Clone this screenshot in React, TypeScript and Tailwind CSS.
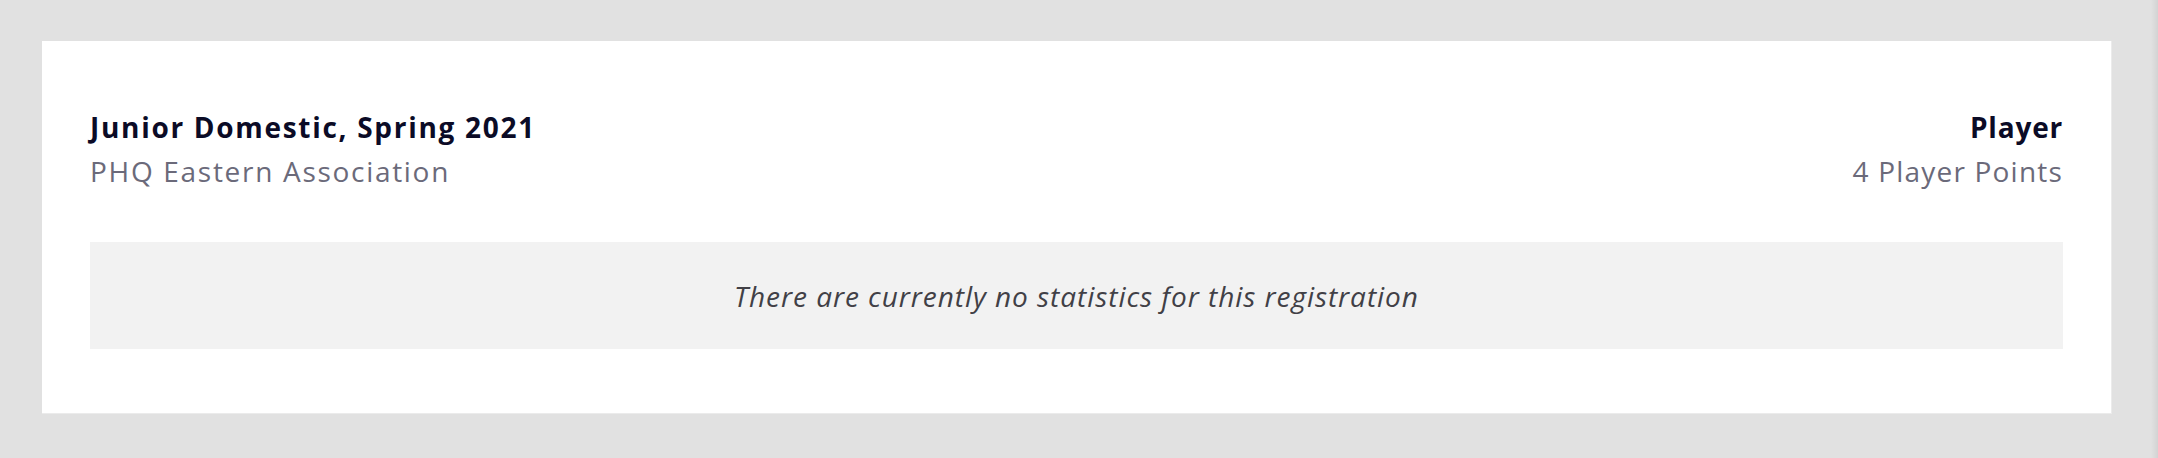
import React from "react";

export default function App() {
  return (
    <div className="flex w-full h-[458px] bg-[#e1e1e1]" style={{ fontFamily: "'Open Sans', 'Noto Sans', sans-serif" }}>
      <div className="flex-1 pl-[42px] pr-[39px] pt-[41px] pb-[45px]">
        <div className="bg-white border-r border-b border-[#ebebeb] px-[48px] pt-[64px] pb-[64px]">
          <div className="flex justify-between">
            <div className="flex flex-col">
              <div className="text-[28px] leading-[44px] font-bold tracking-[1.7px] text-[#0b0b26]">Junior Domestic, Spring 2021</div>
              <div className="text-[28px] leading-[44px] tracking-[1.7px] text-[#6b6a7a]">PHQ Eastern Association</div>
            </div>
            <div className="flex flex-col items-end">
              <div className="text-[28px] leading-[44px] font-bold tracking-[0.8px] text-[#0b0b26]">Player</div>
              <div className="text-[28px] leading-[44px] tracking-[1.2px] text-[#6b6a7a]">4 Player Points</div>
            </div>
          </div>
          <div className="mt-[49px] h-[107px] bg-[#f2f2f2] flex items-center justify-center">
            <span className="text-[28px] italic tracking-[0.95px] text-[#414046]">There are currently no statistics for this registration</span>
          </div>
        </div>
      </div>
      <div className="w-[7px] bg-gradient-to-r from-[#e1e1e1] to-[#d3d3d3]" />
    </div>
  );
}
